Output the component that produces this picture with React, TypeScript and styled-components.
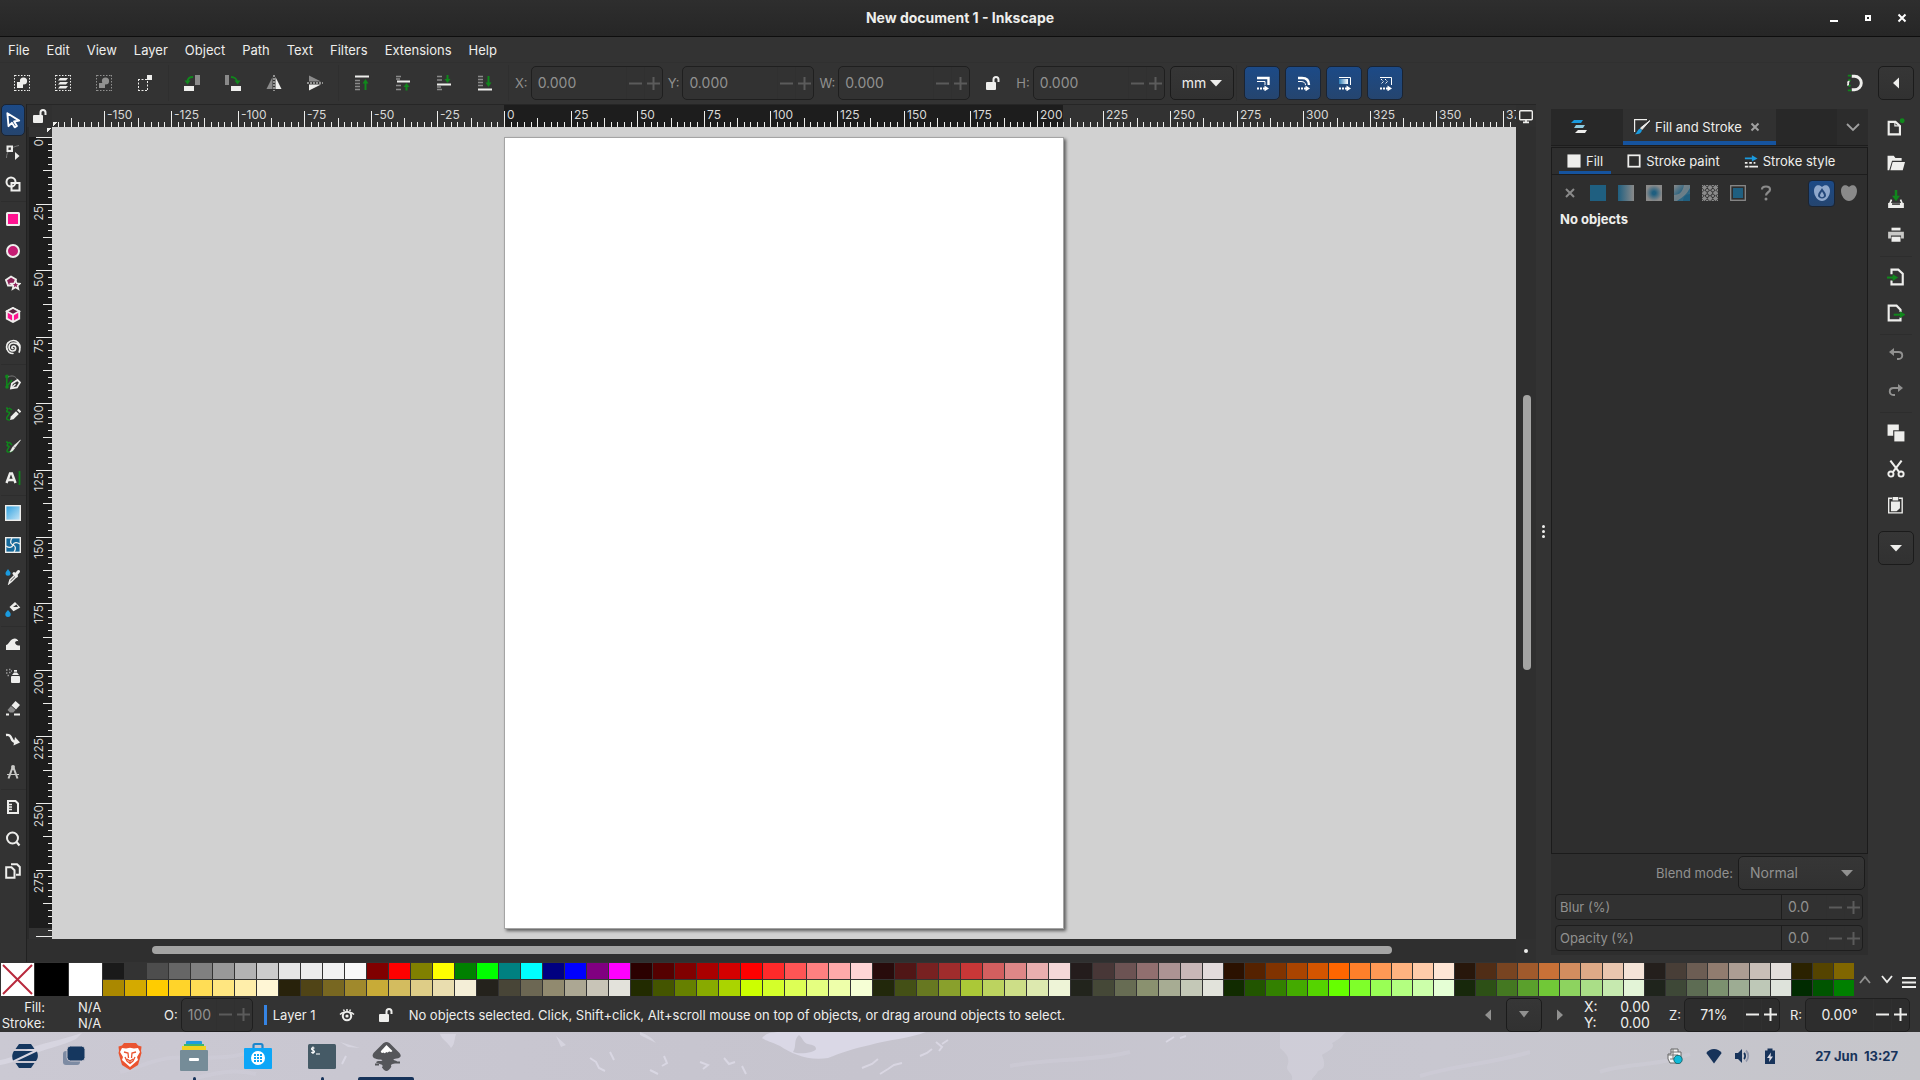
import React from "react";
import styled, { createGlobalStyle, css } from "styled-components";

const GlobalStyle = createGlobalStyle`
  *, *::before, *::after { box-sizing: border-box; }
  html, body { margin: 0; padding: 0; background: #333333; }
  body, button, input, select {
    font-family: Inter, "Noto Sans", sans-serif;
    font-size: 13px;
    line-height: 16px;
    color: #eeeeec;
  }
  button { border: 0; padding: 0; margin: 0; background: none; }
  svg { display: block; flex: none; }
`;

/* ---------- window frame ---------- */

const Screen = styled.div`
  display: flex;
  flex-direction: column;
  min-height: 100vh;
  background: #333333;
  overflow: hidden;
`;

const TitleBar = styled.header`
  display: grid;
  grid-template-columns: 1fr auto 1fr;
  align-items: center;
  height: 37px;
  padding-bottom: 1px;
  background: linear-gradient(#2e2e2e, #262626);
  border-bottom: 1px solid #0e0e0e;
`;

const Title = styled.h1`
  grid-column: 2;
  margin: 0;
  font-size: 14px;
  line-height: 16px;
  font-weight: 700;
`;

const WindowButtons = styled.div`
  display: flex;
  justify-content: flex-end;
  padding-right: 1px;
`;

const WindowButton = styled.button`
  display: grid;
  place-items: center;
  width: 34px;
  height: 34px;
`;

const MenuBar = styled.nav`
  display: flex;
  align-items: center;
  gap: 1px;
  height: 25px;
`;

const MenuItem = styled.button`
  padding: 0 8px;
  height: 25px;
`;

/* ---------- tool controls ---------- */

const ToolControls = styled.div`
  display: flex;
  align-items: center;
  height: 42px;
  padding: 0 6px 0 1px;
  box-shadow: inset 0 1px #303030;
`;

const Group = styled.div`
  display: flex;
  align-items: center;
`;

const FlatButton = styled.button<{ $w?: number; $h?: number; $dim?: boolean }>`
  display: grid;
  place-items: center;
  width: ${(p) => p.$w ?? 41}px;
  height: ${(p) => p.$h ?? 34}px;
  opacity: ${(p) => (p.$dim ? 0.5 : 1)};
`;

const RaisedButton = styled.button<{ $w?: number; $dim?: boolean }>`
  display: grid;
  place-items: center;
  width: ${(p) => p.$w ?? 36}px;
  height: 34px;
  border: 1px solid #1b1b1b;
  border-radius: 5px;
  background: linear-gradient(#363636, #313131);
  color: ${(p) => (p.$dim ? "#919190" : "#eeeeec")};
`;

const activeFill = css`
  background: linear-gradient(#1c4a87, #25456f);
  border: 1px solid #1a2433;
`;

const ToggleButton = styled.button`
  ${activeFill}
  display: grid;
  place-items: center;
  width: 36px;
  height: 34px;
  border-radius: 5px;
`;

const VLine = styled.span`
  width: 6px;
  height: 36px;
  background: linear-gradient(#2f2f2f, #2f2f2f) center / 1px 100% no-repeat;
`;

const Spacer = styled.span`
  flex: 1;
`;

const Fields = styled.div`
  display: flex;
  align-items: center;
  gap: 5px;
  margin-left: 4px;
`;

const Field = styled.div`
  display: flex;
  align-items: center;
  gap: 3px;
`;

const FieldLabel = styled.label<{ $dim?: boolean }>`
  color: ${(p) => (p.$dim ? "#919190" : "#eeeeec")};
`;

const SpinBox = styled.div<{ $w: number; $dim?: boolean }>`
  display: flex;
  align-items: stretch;
  width: ${(p) => p.$w}px;
  height: 34px;
  border: 1px solid #1f1f1f;
  border-radius: 5px;
  background: ${(p) => (p.$dim ? "#323232" : "#2d2d2d")};
  color: ${(p) => (p.$dim ? "#919190" : "#eeeeec")};
`;

const SpinInput = styled.input<{ $centered?: boolean }>`
  flex: 1;
  min-width: 0;
  padding: 0 0 0 ${(p) => (p.$centered ? 0 : 6)}px;
  border: 0;
  outline: 0;
  background: none;
  color: inherit;
  font-size: 14px;
  text-align: ${(p) => (p.$centered ? "center" : "left")};
`;

const SpinStep = styled.button<{ $dim?: boolean; $w?: number }>`
  display: grid;
  place-items: center;
  width: ${(p) => p.$w ?? 18}px;
  border-left: 1px solid #303030;
  color: ${(p) => (p.$dim ? "#5b5b5b" : "#eeeeec")};
`;

const SelectBox = styled.div<{ $w: number; $dim?: boolean }>`
  position: relative;
  display: flex;
  width: ${(p) => p.$w}px;
  height: 34px;
  border: 1px solid #1b1b1b;
  border-radius: 5px;
  background: linear-gradient(#363636, #313131);
  color: ${(p) => (p.$dim ? "#919190" : "#eeeeec")};
  > svg {
    position: absolute;
    right: 11px;
    top: 13px;
    pointer-events: none;
  }
`;

const Select = styled.select`
  appearance: none;
  flex: 1;
  min-width: 0;
  padding: 0 0 0 11px;
  border: 0;
  outline: 0;
  background: none;
  color: inherit;
  font-size: 14px;
  opacity: 1;
`;

/* ---------- work area ---------- */

const WorkArea = styled.main`
  display: flex;
  flex: 1;
  min-height: 0;
`;

const Toolbox = styled.aside`
  display: flex;
  flex-direction: column;
  width: 27px;
  padding-left: 1px;
  border-right: 1px solid #212121;
`;

const ToolButton = styled.button<{ $on?: boolean }>`
  display: grid;
  place-items: center;
  width: 24px;
  height: 32px;
  border: 1px solid transparent;
  border-radius: 5px;
  ${(p) => p.$on && activeFill}
`;

const HLine = styled.span<{ $h?: number }>`
  flex: none;
  height: ${(p) => p.$h ?? 3}px;
  background: linear-gradient(#2d2d2d, #2d2d2d) center / 100% 1px no-repeat;
`;

const Desk = styled.section`
  display: grid;
  flex: 1;
  min-width: 0;
  grid-template-columns: 25px 1fr 20px;
  grid-template-rows: 22px 1fr 23px;
  border-top: 1px solid #262626;
  background: #2f2f2f;
`;

const Corner = styled.button`
  display: grid;
  place-items: center;
  background: #303030;
`;

const TopRuler = styled.div`
  overflow: hidden;
  background: #323232;
`;

const SideRuler = styled.div`
  overflow: hidden;
  height: 0;
  min-height: 100%;
  background: #323232;
  border-left: 2px solid #2a2a2a;
`;

const RulerText = styled.text`
  font-family: Inter, "Noto Sans", sans-serif;
  font-size: 12px;
  fill: #d8d8d6;
`;

const Canvas = styled.div`
  min-width: 0;
  overflow: hidden;
  background: #d1d1d1;
  padding: 10px 0 10px 452px;
`;

const Sheet = styled.div`
  width: 560px;
  height: 792px;
  background: #ffffff;
  border: 1px solid #a4a4a4;
  box-shadow: 2px 2px 3px rgba(0, 0, 0, 0.55);
`;

const VScroll = styled.div`
  display: flex;
  flex-direction: column;
  align-items: center;
  padding: 268px 0 0 2px;
`;

const VThumb = styled.span`
  width: 8px;
  height: 275px;
  border-radius: 4px;
  background: #a4a4a3;
`;

const HScroll = styled.div`
  display: flex;
  align-items: center;
  padding: 0 124px 1px 100px;
`;

const HThumb = styled.span`
  flex: 1;
  height: 8px;
  border-radius: 4px;
  background: #a4a4a3;
`;

const PaneHandle = styled.div`
  display: flex;
  flex-direction: column;
  align-items: center;
  justify-content: center;
  gap: 2px;
  width: 15px;
  padding-bottom: 4px;
`;

const Dot = styled.span<{ $s?: number }>`
  width: ${(p) => p.$s ?? 3}px;
  height: ${(p) => p.$s ?? 3}px;
  border-radius: 50%;
  background: #eeeeec;
`;

/* ---------- docked dialog ---------- */

const Dock = styled.aside`
  display: flex;
  flex-direction: column;
  width: 317px;
  margin: 5px 0 7px;
  background: #2e2e2e;
`;

const DockTabs = styled.div`
  display: flex;
  height: 37px;
  background: #282828;
  border-bottom: 1px solid #1d1d1d;
`;

const DockTab = styled.button<{ $on?: boolean }>`
  display: flex;
  align-items: center;
  gap: 5px;
  width: ${(p) => (p.$on ? 153 : 72)}px;
  padding: 4px 0 0 ${(p) => (p.$on ? 11 : 20)}px;
  background: ${(p) => (p.$on ? "#313131" : "transparent")};
  border-bottom: 4px solid ${(p) => (p.$on ? "#15539e" : "transparent")};
`;

const DockMenu = styled.button`
  display: grid;
  place-items: center;
  width: 31px;
  background: #2c2c2c;
`;

const DialogBody = styled.div`
  display: flex;
  flex: 1;
  flex-direction: column;
  margin: 1px 0 2px;
  border: 1px solid #1b1b1b;
`;

const SubTabs = styled.div`
  display: flex;
  gap: 8px;
  height: 27px;
  padding: 0 7px;
  border-bottom: 1px solid #1d1d1d;
`;

const SubTab = styled.button<{ $on?: boolean }>`
  display: flex;
  align-items: center;
  gap: 5px;
  padding: 2px 8px 0;
  border-bottom: 3px solid ${(p) => (p.$on ? "#15539e" : "transparent")};
`;

const PaintRow = styled.div`
  display: flex;
  align-items: center;
  height: 36px;
  padding: 0 4px;
`;

const RuleToggle = styled.button`
  ${activeFill}
  display: grid;
  place-items: center;
  width: 27px;
  height: 27px;
  border-radius: 4px;
`;

const Message = styled.p`
  margin: 0;
  padding: 0 8px;
  font-weight: 700;
`;

const BlendRow = styled.div`
  display: flex;
  align-items: center;
  justify-content: flex-end;
  gap: 5px;
  padding-right: 3px;
`;

const Sliders = styled.div`
  display: grid;
  gap: 5px;
  padding: 4px 5px 4px 4px;
`;

const SliderRow = styled.div`
  display: flex;
  align-items: stretch;
  height: 26px;
  border: 1px solid #1d1d1d;
  border-radius: 4px;
  background: #313131;
  color: #919190;
`;

const SliderLabel = styled.label`
  display: flex;
  flex: 1;
  align-items: center;
  padding-left: 4px;
  border-right: 1px solid #1d1d1d;
`;

const SliderValue = styled.div`
  display: flex;
  width: 80px;
`;

const Commands = styled.aside`
  display: flex;
  flex-direction: column;
  align-items: center;
  width: 52px;
  padding: 5px 0 0 4px;
  > ${HLine} { width: 32px; }
  > ${RaisedButton} { margin-top: 8px; }
`;

/* ---------- palette ---------- */

const Palette = styled.div`
  display: flex;
  align-items: flex-start;
  height: 35px;
  padding: 1px 0 0 1px;
`;

const BigSwatches = styled.div`
  display: flex;
  gap: 1px;
  padding-right: 1px;
`;

const BigSwatch = styled.button<{ $c: string }>`
  width: 33px;
  height: 33px;
  background: ${(p) => p.$c};
`;

const SwatchGrid = styled.div`
  display: grid;
  flex: 1;
  grid-template-columns: repeat(50, 22fr) repeat(31, 21fr);
  grid-template-rows: 16px 16px;
  gap: 1px;
`;

const Swatch = styled.button<{ $c: string }>`
  background: ${(p) => p.$c};
`;

const PaletteNav = styled.div`
  display: flex;
  align-items: center;
  height: 33px;
  width: 66px;
`;

/* ---------- status bar ---------- */

const StatusBar = styled.footer`
  display: flex;
  align-items: center;
  height: 35px;
`;

const StyleIndicator = styled.dl`
  display: grid;
  grid-template-columns: 45px auto;
  column-gap: 33px;
  margin: 0;
  width: 164px;
  dt { text-align: right; }
  dd { margin: 0; }
`;

const LayerButton = styled.button`
  padding-left: 6px;
  height: 20px;
  margin-left: 11px;
  border-left: 3px solid #3584e4;
`;

const Coordinates = styled.dl`
  display: grid;
  grid-template-columns: auto auto;
  justify-content: space-between;
  margin: 0 15px 0 6px;
  width: 66px;
  font-size: 14px;
  dd { margin: 0; text-align: right; }
`;

const StatusText = styled.p`
  margin: 0 0 0 15px;
  white-space: nowrap;
`;

/* ---------- desktop panel ---------- */

const Taskbar = styled.footer`
  position: relative;
  display: flex;
  align-items: stretch;
  height: 48px;
  overflow: hidden;
  background: linear-gradient(90deg, #cbc9d3, #c6c4ce 45%, #c8c7d0 75%, #c5c5ca);
  color: #17335a;
`;

const Wallpaper = styled.svg`
  position: absolute;
  left: 0;
  top: 0;
`;

const Launcher = styled.button<{ $w: number; $mark?: "dot" | "bar" }>`
  position: relative;
  display: grid;
  place-items: center;
  width: ${(p) => p.$w}px;
  height: 48px;
  &::after {
    content: "";
    position: absolute;
    bottom: 0;
    display: ${(p) => (p.$mark ? "block" : "none")};
    width: ${(p) => (p.$mark === "bar" ? 56 : 3)}px;
    height: 3px;
    border-radius: 2px 2px 0 0;
    background: #17335a;
  }
`;

const Tray = styled.div`
  position: relative;
  display: flex;
  align-items: center;
  margin-left: auto;
  padding-right: 22px;
`;

const Clock = styled.time`
  margin-left: 26px;
  font-weight: 700;
  white-space: pre;
`;

/* ---------- drawings ---------- */

const W = "#eeeeec";
const G = "#10871c";
const B = "#1a9ade";

const Ico = ({ s = 16, children }: { s?: number; children: React.ReactNode }) => (
  <svg width={s} height={s} viewBox="0 0 16 16" fill="none" aria-hidden="true">
    {children}
  </svg>
);

const Marquee = () => (
  <path d="M1 .5h15M1 15.5h15M.5 0v16M15.5 0v16" stroke={W} strokeDasharray="1.5 1.5" />
);

const selectAll = (
  <Ico>
    <Marquee />
    <rect x="3" y="7" width="6" height="6" fill={W} />
    <circle cx="9.5" cy="6" r="3.6" fill={W} />
  </Ico>
);
const selectLayers = (
  <Ico>
    <Marquee />
    <path d="M5 3h8l-2 2.500H3zM5 7h8l-2 2.500H3zM5 11h8l-2 2.500H3z" fill={W} />
  </Ico>
);
const deselect = (
  <Ico>
    <Marquee />
    <rect x="3" y="8" width="6" height="5" fill={W} />
    <circle cx="9.5" cy="6" r="3.6" fill={W} />
  </Ico>
);
const touchSelect = (
  <Ico>
    <path d="M1 4.500h10M1 15.500h10M1.500 4v12M10.500 6v10" stroke={W} strokeDasharray="2 1.500" />
    <rect x="10" y="0" width="5" height="5" fill={W} />
  </Ico>
);
const rotateLeft = (
  <Ico>
    <rect x="11" y="0" width="5" height="10" fill="#8a8a8a" />
    <rect x="0" y="11" width="10" height="5" fill={W} />
    <path d="M9 2C5.500 2 3.500 4 3.500 7" stroke={G} strokeWidth="1.800" />
    <path d="M.5 5.500h6L3.500 9.500z" fill={G} />
  </Ico>
);
const rotateRight = (
  <Ico>
    <rect x="0" y="0" width="4" height="10" fill="#8a8a8a" />
    <rect x="6" y="11" width="10" height="5" fill={W} />
    <path d="M6 2c3.500 0 6 2 6 5" stroke={G} strokeWidth="1.800" />
    <path d="M9.500 5.500h6l-3 4z" fill={G} />
  </Ico>
);
const flipH = (
  <Ico>
    <path d="M6.500 2v12H.5z" fill="#8a8a8a" />
    <path d="M9.500 2v12h6z" fill={W} />
    <path d="M8 0v16" stroke={W} strokeDasharray="2 1" />
  </Ico>
);
const flipV = (
  <Ico>
    <path d="M2 6.500V.5l12 6z" fill="#8a8a8a" />
    <path d="M2 9.500v6l12-6z" fill={W} />
    <path d="M0 8h16" stroke={W} strokeDasharray="2 1" />
  </Ico>
);
const raiseTop = (
  <Ico>
    <path d="M1 1.500h14" stroke={W} strokeWidth="2" />
    <path d="M1 5.500h5M1 8.500h5M1 11.500h5M1 14.500h5" stroke="#8a8a8a" strokeWidth="1.500" />
    <path d="M11.500 15V7" stroke={G} strokeWidth="2" />
    <path d="M8.500 8.500 11.500 4l3 4.500z" fill={G} />
  </Ico>
);
const raise = (
  <Ico>
    <path d="M2 6.500h13" stroke={W} strokeWidth="2" />
    <path d="M1 1.500h5M1 4h4M1 10.500h5M1 14.500h5" stroke="#8a8a8a" strokeWidth="1.500" />
    <path d="M11.500 15.500V11" stroke={G} strokeWidth="2" />
    <path d="M8.500 12 11.500 8l3 4z" fill={G} />
  </Ico>
);
const lower = (
  <Ico>
    <path d="M1 9.500h14" stroke={W} strokeWidth="2" />
    <path d="M1 1.500h5M1 5h5M1 12h4M1 14.500h5" stroke="#8a8a8a" strokeWidth="1.500" />
    <path d="M11.500 0v5" stroke={G} strokeWidth="2" />
    <path d="M8.500 4 11.500 8l3-4z" fill={G} />
  </Ico>
);
const lowerBottom = (
  <Ico>
    <path d="M1 14.500h14" stroke={W} strokeWidth="2" />
    <path d="M1 1.500h5M1 4.500h5M1 7.500h5M1 10.500h5" stroke="#8a8a8a" strokeWidth="1.500" />
    <path d="M11.500 1v8" stroke={G} strokeWidth="2" />
    <path d="M8.500 7.500 11.500 12l3-4.500z" fill={G} />
  </Ico>
);
const lock = (
  <Ico>
    <rect x="1" y="7" width="10" height="8" rx="1" fill={W} />
    <path d="M8.500 7V4.500a2.500 2.500 0 0 1 5 0V7" stroke={W} strokeWidth="2" />
  </Ico>
);
const Arrow = () => (
  <>
    <path d="M3 13.500h8" stroke="#fff" strokeWidth="1.800" strokeDasharray="2 1" />
    <path d="M10.500 10.500 15 13.500l-4.500 2.800z" fill="#fff" />
  </>
);
const scaleStroke = (
  <Ico>
    <path d="M3 3h11.500v7" stroke="#fff" strokeWidth="2.400" />
    <path d="M3 6.500h8V10" stroke="#fff" />
    <Arrow />
  </Ico>
);
const scaleCorners = (
  <Ico>
    <path d="M3 3h4c5 0 7 2.500 7 7" stroke="#fff" strokeWidth="2.400" />
    <path d="M3 6.500h3c3 0 4.500 1.500 4.500 3.500" stroke="#fff" />
    <Arrow />
  </Ico>
);
const moveGradients = (
  <Ico>
    <defs>
      <linearGradient id="mg">
        <stop stopColor="#2a7ab5" />
        <stop offset="1" stopColor="#fff" />
      </linearGradient>
    </defs>
    <path d="M3 2.500h11.500V10" stroke="#fff" />
    <rect x="3" y="4" width="9" height="5" fill="url(#mg)" />
    <Arrow />
  </Ico>
);
const movePatterns = (
  <Ico>
    <path d="M3 2.500h11.500V10" stroke="#fff" />
    <path d="m4 4 2.500 2.500L4 9M8 4l2.500 2.500L8 9" stroke="#fff" strokeDasharray="1.500 .7" />
    <Arrow />
  </Ico>
);
const magnet = (
  <Ico s={18}>
    <path d="M6 2h2.500a6 6 0 0 1 0 12H6" stroke={W} strokeWidth="2.600" />
    <path d="M2.500 1.500h3M2.500 14.500h3M3 5l2 1M3 11l2-1" stroke={G} strokeWidth="1.600" />
    <path d="M4 6.500C1 7 4.500 9 2 10" stroke={W} strokeWidth="1.600" />
  </Ico>
);
const TriLeft = ({ c = W }: { c?: string }) => (
  <Ico>
    <path d="M11 2.500v11L5 8z" fill={c} />
  </Ico>
);
const TriRight = ({ c = W }: { c?: string }) => (
  <Ico>
    <path d="M5 2.500v11L11 8z" fill={c} />
  </Ico>
);
const TriDown = ({ w = 12 }: { w?: number }) => (
  <svg width={w} height="7" viewBox="0 0 12 7" preserveAspectRatio="none" aria-hidden="true">
    <path d="M0 0h12L6 6.500z" fill="currentColor" />
  </svg>
);
const Minus = () => (
  <svg width="13" height="13" viewBox="0 0 13 13" aria-hidden="true">
    <path d="M0 6.500h13" stroke="currentColor" strokeWidth="2" />
  </svg>
);
const Plus = () => (
  <svg width="13" height="13" viewBox="0 0 13 13" aria-hidden="true">
    <path d="M0 6.500h13M6.500 0v13" stroke="currentColor" strokeWidth="2" />
  </svg>
);

const arrowTool = (
  <Ico s={18}>
    <path d="m3 2 10.500 6.500-4.500.8 2.500 4-2 1.200L7 10.500 4 13.500z" stroke="#fff" strokeWidth="1.700" strokeLinejoin="round" />
  </Ico>
);
const nodeTool = (
  <Ico>
    <path d="M1.500 14C1.500 7 6 3 14 1.500" stroke="#777" />
    <rect x="2.500" y="2.500" width="4.500" height="4.500" stroke={W} strokeWidth="2" />
    <path d="M10 8v8l4.500-4z" fill={W} />
  </Ico>
);
const shapeBuilder = (
  <Ico>
    <circle cx="6" cy="6" r="4.5" stroke={W} strokeWidth="2" />
    <rect x="6.500" y="7" width="8" height="7.500" stroke={W} strokeWidth="2" />
  </Ico>
);
const rectTool = (
  <Ico>
    <rect x="2" y="2" width="12" height="12" rx=".5" fill="#ff1290" stroke={W} strokeWidth="2" />
  </Ico>
);
const ellipseTool = (
  <Ico>
    <circle cx="8" cy="8" r="6" fill="#c51c73" stroke={W} strokeWidth="2" />
  </Ico>
);
const starTool = (
  <Ico>
    <path d="m6 1.500 5 3-1.500 6H3L1 5z" fill="#8d2359" stroke={W} strokeWidth="1.800" />
    <path d="m10.500 5.500 1.300 2.800 3.200.3-2.400 2.100.8 3.300-2.900-1.700-2.900 1.700.8-3.300-2.400-2.100 3.200-.3z" fill="#8d2359" stroke={W} strokeWidth="1.600" />
  </Ico>
);
const boxTool = (
  <Ico>
    <path d="m8 1 6.200 3.300v7.400L8 15l-6.200-3.300V4.300z" fill="#ff1290" stroke={W} strokeWidth="1.900" />
    <path d="m8 1 6.200 3.300L8 7.700 1.800 4.300z" fill="#5d2442" stroke={W} strokeWidth="1.700" />
    <path d="M8 7.700V15" stroke={W} strokeWidth="1.900" />
  </Ico>
);
const spiralTool = (
  <Ico>
    <path d="M8 9.500c-1.500 0-1.500-2.500.5-2.500 3 0 3 5-.8 5-5 0-5-8 1-8 5.800 0 7 5 5.500 9M2 10C.5 5 4 1.500 8.500 1.500c3.500 0 6.500 3 6.500 7" stroke={W} strokeWidth="1.700" strokeLinecap="round" />
    <path d="M2 10c.8 3 3 4.500 6 4.500" stroke={W} strokeWidth="1.500" strokeLinecap="round" />
  </Ico>
);
const penTool = (
  <Ico>
    <path d="M1.800 3v10M2 12 7 6" stroke={G} strokeWidth="1.500" />
    <circle cx="2" cy="2.5" r="2" fill={G} />
    <circle cx="2" cy="13" r="1.800" fill={G} />
    <path d="M3 3c4-2 7-1 9 2" stroke="#777" />
    <path d="M6 14.500 7 9.500l5.500-3.500 2.500 2.500-3 5z" stroke={W} strokeWidth="1.800" />
    <path d="m6 14.500 4.500-4.500" stroke={W} strokeWidth="1.400" />
  </Ico>
);
const pencilTool = (
  <Ico>
    <path d="M1 2c5 0-2 4 2 4s0 3-1 5 0 3 3 3M4 2l3 2" stroke={G} strokeWidth="1.500" />
    <path d="m5 14 .8-3.500L11 5.300l2.800 2.800L8.500 13.300z" fill={W} />
    <path d="m12 4.300 1.500-1.500 2.700 2.700L14.700 7z" fill={W} />
  </Ico>
);
const callTool = (
  <Ico>
    <path d="M1 4c5 0-1 4 2 4s-1 3-1 5c0 2 4 1 6-1M4 4l3 3" stroke={G} strokeWidth="1.500" />
    <path d="M15.500 2 10 9.500 8.500 8zM8 8.500 9.700 10 8 12.500l-3 1.500z" fill={W} stroke={W} strokeWidth=".6" />
  </Ico>
);
const textTool = (
  <Ico>
    <path d="M1.500 13 5 3.500h2L10.500 13M3 10h6" stroke={W} strokeWidth="2.400" />
    <path d="M14.500 1v14" stroke={G} strokeWidth="1.800" />
  </Ico>
);
const gradientTool = (
  <Ico>
    <defs>
      <linearGradient id="gt" x1="0" y1="0" x2="1" y2="1">
        <stop stopColor="#2a9fe0" />
        <stop offset="1" stopColor="#c9e6f6" />
      </linearGradient>
    </defs>
    <rect x=".7" y=".7" width="14.6" height="14.6" fill="url(#gt)" stroke={W} strokeWidth="1.400" />
  </Ico>
);
const meshTool = (
  <Ico>
    <rect x=".7" y=".7" width="14.6" height="14.6" fill="#15699b" stroke={W} strokeWidth="1.400" />
    <path d="M8 8C5 7 5 4 7 1M8 8c1-3 4-3 7-1M8 8c3 1 3 4 1 7M8 8c-1 3-4 3-7 1" stroke={W} strokeWidth="1.300" />
  </Ico>
);
const dropperTool = (
  <Ico>
    <path d="M3 0c1 2 2.500 2.500 2.500 4.300a2.500 2.500 0 0 1-5 0C.5 2.500 2 2 3 0z" fill={B} />
    <path d="m4 14.500 1-3.500 5-5 1.500 1.500-5 5z" stroke={W} strokeWidth="1.500" />
    <path d="M9 4.500 11.500 7M10.500 6l3-3.500" stroke={W} strokeWidth="3" strokeLinecap="round" />
  </Ico>
);
const bucketTool = (
  <Ico>
    <path d="m10 1 5.300 5.500-6.800 3.800-4-4.300z" fill={W} />
    <path d="m8 6 3.500-2.500L13 6z" fill="#333" />
    <path d="M3 9c1 1.500 2.700 2.500 2.700 4.200a2.700 2.700 0 0 1-5.400 0C.3 11.500 2 10.500 3 9z" fill={B} />
  </Ico>
);
const tweakTool = (
  <Ico>
    <path d="M1 14V9c3 0 3.500-6 8.500-6.500 2.500 0 3.500 1.500 3.800 2.800-2-.8-3.800.5-3 2.200.7 1.700 2.500 2 4.700 2V14z" fill={W} />
  </Ico>
);
const sprayTool = (
  <Ico>
    <rect x="6" y="8" width="9" height="7" rx="1" fill={W} />
    <path d="M7 7h7l-2-2.500H9zM9 2h3v1.800H9z" fill={W} />
    <path d="M1 2h1.500M4 1.500h1.500M1 5h1.500M4 4.500h1.500M2.500 7.500H4M6 3h1" stroke="#999" strokeWidth="1.400" />
  </Ico>
);
const eraserTool = (
  <Ico>
    <path d="m10.500 1 4.500 4-4 4.500L6.500 5.500z" fill={W} />
    <path d="m6 6 4.500 4-2.200 2.500H5L2.500 10z" fill="#8a8a8a" />
    <path d="M1 14.500h3M9 14.500h6" stroke={W} strokeWidth="1.800" />
  </Ico>
);
const connectorTool = (
  <Ico>
    <path d="M1 3c8-1 3 7 10 7" stroke={W} strokeWidth="2.400" />
    <path d="m10 5 5 5.500-6.500 3z" fill={W} />
  </Ico>
);
const lpeTool = (
  <Ico>
    <path d="M3.500 14.500 7 5h2l3.500 9.500" stroke="#c9c9c7" strokeWidth="2" />
    <circle cx="8" cy="3" r="2" fill="#c9c9c7" />
    <path d="M2 10.500h12" stroke="#c9c9c7" />
  </Ico>
);
const measureTool = (
  <Ico>
    <path d="M3 2h7.500L13 4.500V14H3z" stroke={W} strokeWidth="2" />
    <path d="M3 5.500h4M3 8h4M3 10.500h4" stroke={W} strokeWidth="1.400" />
  </Ico>
);
const zoomTool = (
  <Ico>
    <circle cx="7.5" cy="7" r="5.5" stroke={W} strokeWidth="2" />
    <path d="m11.500 11 3 3.500" stroke={W} strokeWidth="2.200" />
  </Ico>
);
const pagesTool = (
  <Ico>
    <path d="M1.200 4.200h5.300l3 3v7.600H1.200z" stroke={W} strokeWidth="2" />
    <path d="M6 1.200h6l2.800 2.800v7.800H11" stroke={W} strokeWidth="2" />
  </Ico>
);

const tools: React.ReactNode[][] = [
  [arrowTool, nodeTool, shapeBuilder],
  [rectTool, ellipseTool, starTool, boxTool, spiralTool],
  [penTool, pencilTool, callTool, textTool],
  [gradientTool, meshTool, dropperTool, bucketTool],
  [tweakTool, sprayTool, eraserTool, connectorTool, lpeTool],
  [measureTool, zoomTool, pagesTool],
];

const newDoc = (
  <Ico s={18}>
    <path d="M1.500 3.500h6l4 3.500v7.500h-10z" stroke={W} strokeWidth="1.900" />
    <path d="M7 3.500V7h4.500" stroke={W} />
    <circle cx="13.5" cy="2.5" r="2.2" fill={G} />
  </Ico>
);
const openDoc = (
  <Ico s={18}>
    <path d="M.5 14.500v-13H6l1.500 2H13V6H4.500L2 14.500z" fill={W} />
    <path d="M5 7h11l-2 7.500H3z" fill={W} />
  </Ico>
);
const saveDoc = (
  <Ico s={18}>
    <path d="M4 8.500 2.500 12M12 8.500l1.500 3.500" stroke={W} strokeWidth="1.500" />
    <path d="M1 11.500h14V16H1z" fill={W} />
    <path d="M4.500 12.500h7" stroke="#333" strokeWidth="1.400" />
    <path d="M8 0v6" stroke={G} strokeWidth="2.200" />
    <path d="M4.500 5h7L8 10z" fill={G} />
  </Ico>
);
const printDoc = (
  <Ico s={18}>
    <path d="M4 1.500h8V4H4z" fill={W} />
    <path d="M1 5h14v6h-2.500V8.500h-9V11H1z" fill="#c9c9c7" />
    <path d="M4 9.500h8V14H4z" fill={W} />
  </Ico>
);
const importDoc = (
  <Ico s={18}>
    <path d="M4 5.500V1.500h6l4 3.500v9.500H4V11" stroke={W} strokeWidth="1.900" />
    <path d="M0 8.500h6" stroke={G} strokeWidth="1.800" />
    <path d="M5 5.500 10 8.500 5 11.500z" fill={G} />
  </Ico>
);
const exportDoc = (
  <Ico s={18}>
    <path d="M12 7V5L8.500 1.500h-7v13H12V12" stroke={W} strokeWidth="1.900" />
    <path d="M6 9.500h6" stroke={G} strokeWidth="1.800" />
    <path d="m11.500 6.500 5 3-5 3z" fill={G} />
  </Ico>
);
const undo = (
  <Ico>
    <path d="M4 5h6.500c5 0 5 7 0 7H9" stroke={W} strokeWidth="1.900" />
    <path d="M6 1v8L1 5z" fill={W} />
  </Ico>
);
const redo = (
  <Ico>
    <path d="M12 5H5.500c-5 0-5 7 0 7H7" stroke={W} strokeWidth="1.900" />
    <path d="M10 1v8l5-4z" fill={W} />
  </Ico>
);
const copyIcon = (
  <Ico s={18}>
    <path d="M.5.5h10v5h-5v5h-5z" fill={W} />
    <path d="M6.500 6.500H15.500v9h-9z" fill={W} />
  </Ico>
);
const cutIcon = (
  <Ico s={18}>
    <path d="m3 .5 8 10.500M13 .5 5 11" stroke={W} strokeWidth="1.800" />
    <circle cx="3.5" cy="12.5" r="2.3" stroke={W} strokeWidth="1.700" />
    <circle cx="12.5" cy="12.5" r="2.3" stroke={W} strokeWidth="1.700" />
  </Ico>
);
const pasteIcon = (
  <Ico s={18}>
    <path d="M4.500 2H1.500v13h12V2h-3" stroke={W} strokeWidth="1.200" />
    <path d="M5 .8h5V4H5zM3.500 4.800h8v6l-3 2.700h-5z" fill={W} />
  </Ico>
);

const commandGroups: { dim?: boolean; items: React.ReactNode[] }[] = [
  { items: [newDoc, openDoc, saveDoc, printDoc] },
  { items: [importDoc, exportDoc] },
  { dim: true, items: [undo, redo] },
  { items: [copyIcon, cutIcon, pasteIcon] },
];

/* ---------- data ---------- */

const ROW_ONE =
  "1a1a1a 333333 4d4d4d 666666 808080 999999 b3b3b3 cccccc e6e6e6 ececec f2f2f2 f9f9f9 " +
  "800000 ff0000 808000 ffff00 008000 00ff00 008080 00ffff 000080 0000ff 800080 ff00ff " +
  "2b0000 550000 800000 aa0000 d40000 ff0000 ff2a2a ff5555 ff8080 ffaaaa ffd5d5 " +
  "280b0b 501616 782121 a02c2c c83737 d35f5f de8787 e9afaf f4d7d7 " +
  "241c1c 483737 6c5353 916f6f ac9393 c8b7b7 e3dbdb " +
  "2b1100 552200 803300 aa4400 d45500 ff6600 ff7f2a ff9955 ffb380 ffccaa ffe6d5 " +
  "28170b 502d16 784421 a05a2c c87137 d38d5f deaa87 e9c6af f4e3d7 " +
  "241f1c 483e37 6c5d53 917c6f ac9d93 c8beb7 e3dedb 2b2200 554400 806600";
const ROW_TWO =
  "aa8800 d4aa00 ffcc00 ffd42a ffdd55 ffe680 ffeeaa fff6d5 " +
  "28220b 504416 786721 a0892c c8ab37 d3bc5f decd87 e9ddaf f4eed7 " +
  "24221c 484537 6c6753 918a6f aca793 c8c4b7 e3e2db " +
  "222b00 445500 668000 88aa00 aad400 ccff00 d4ff2a ddff55 e5ff80 eeffaa f6ffd5 " +
  "22280b 445016 677821 89a02c abc837 bcd35f cdde87 dde9af eef4d7 " +
  "22241c 454837 676c53 8a916f a7ac93 c4c8b7 e2e3db " +
  "112b00 225500 338000 44aa00 55d400 66ff00 7fff2a 99ff55 b3ff80 ccffaa e5ffd5 " +
  "17280b 2d5016 447821 5aa02c 71c837 8dd35f aade87 c6e9af e3f4d7 " +
  "1f241c 3e4837 5d6c53 7c916f 9dac93 bec8b7 dee3db 002b00 005500 008000";
const swatches = `${ROW_ONE} ${ROW_TWO}`.split(" ");

const PX_PER_MM = 2.664;

function ticks(from: number, to: number) {
  const out: { mm: number; kind: number }[] = [];
  for (let i = from; i <= to; i++) {
    out.push({ mm: i * 2.5, kind: i % 10 === 0 ? 2 : i % 5 === 0 ? 1 : 0 });
  }
  return out;
}

const HorizontalRuler = () => {
  const origin = 452;
  return (
    <svg width="100%" height="22" shapeRendering="crispEdges" role="img" aria-label="Horizontal ruler">
      <rect x={origin} y="0" width={210 * PX_PER_MM} height="22" fill="#1d1d1d" />
      {ticks(-67, 152).map(({ mm, kind }) => {
        const x = Math.round(origin + mm * PX_PER_MM);
        return (
          <g key={mm}>
            <rect x={x} y={[17, 13, 6][kind]} width="1" height="16" fill={W} />
            {kind === 2 && (
              <RulerText x={x + 3} y="14">
                {mm}
              </RulerText>
            )}
          </g>
        );
      })}
      <path d="M1 21v-4h4z" fill={W} />
    </svg>
  );
};

const VerticalRuler = () => {
  const origin = 10;
  return (
    <svg width="23" height="813" shapeRendering="crispEdges" role="img" aria-label="Vertical ruler">
      <rect x="0" y={origin} width="23" height={297 * PX_PER_MM} fill="#1d1d1d" />
      {ticks(0, 120).map(({ mm, kind }) => {
        const y = Math.round(origin + mm * PX_PER_MM);
        return (
          <g key={mm}>
            <rect x={[19, 14, 7][kind]} y={y} width="16" height="1" fill={W} />
            {kind === 2 && mm < 300 && (
              <RulerText transform={`translate(14 ${y + 2}) rotate(-90)`} textAnchor="end">
                {mm}
              </RulerText>
            )}
          </g>
        );
      })}
      <path d="M22 1h-4v4z" fill={W} />
    </svg>
  );
};

interface SpinProps {
  id: string;
  value: string;
  w: number;
  dim?: boolean;
  centered?: boolean;
}
const Spin = ({ id, value, w, dim, centered }: SpinProps) => (
  <SpinBox $w={w} $dim={dim}>
    <SpinInput id={id} defaultValue={value} disabled={dim} $centered={centered} />
    <SpinStep $dim={dim} aria-label="Decrease"><Minus /></SpinStep>
    <SpinStep $dim={dim} aria-label="Increase"><Plus /></SpinStep>
  </SpinBox>
);

const LabeledSpin = ({ label, brightLabel, ...rest }: SpinProps & { label: string; brightLabel?: boolean }) => (
  <Field>
    <FieldLabel htmlFor={rest.id} $dim={rest.dim && !brightLabel}>{label}</FieldLabel>
    <Spin {...rest} />
  </Field>
);

const paint = "#1f5f80";
const paintIcons = [
  <Ico key="none"><path d="m4 4 8 8M12 4l-8 8" stroke="#8a8a8a" strokeWidth="2" /></Ico>,
  <Ico key="flat"><rect width="16" height="16" fill={paint} /></Ico>,
  <Ico key="lin">
    <defs><linearGradient id="pl"><stop stopColor={paint} /><stop offset="1" stopColor="#8a8a8a" /></linearGradient></defs>
    <rect width="16" height="16" fill="url(#pl)" />
  </Ico>,
  <Ico key="rad">
    <defs><radialGradient id="pr"><stop offset=".2" stopColor={paint} /><stop offset="1" stopColor="#8a8a8a" /></radialGradient></defs>
    <rect width="16" height="16" fill="url(#pr)" />
  </Ico>,
  <Ico key="mesh">
    <defs><linearGradient id="pm" x2="1" y2="1"><stop stopColor="#8a8a8a" /><stop offset=".5" stopColor={paint} /><stop offset="1" stopColor="#4a7488" /></linearGradient></defs>
    <rect width="16" height="16" fill="url(#pm)" />
    <path d="M0 10C6 10 9 6 10 0h6v3c-3 6-7 9-13 13H0z" fill="#8a8a8a" opacity=".7" />
    <path d="M9 16c0-4 3-7 7-7v7z" fill={paint} />
  </Ico>,
  <Ico key="pat">
    {[2.5, 8, 13.5].map((y) => [2.5, 8, 13.5].map((x) => (
      <path key={`${x}-${y}`} d={`M${x} ${y - 2.7}l2.700 2.700-2.700 2.700-2.700-2.700z`} fill="#8a8a8a" />
    )))}
    {[0, 5.2, 10.8, 16].map((y) => [0, 5.2, 10.8, 16].map((x) => (
      <circle key={`${x}-${y}`} cx={x} cy={y} r="1.3" fill="#8a8a8a" />
    )))}
  </Ico>,
  <Ico key="swatch">
    <rect x=".7" y=".7" width="14.6" height="14.6" stroke="#8a8a8a" strokeWidth="1.300" />
    <rect x="3" y="3" width="10" height="10" fill={paint} />
  </Ico>,
  <Ico key="unset">
    <path d="M4 4.500C4 .5 12 .5 12 4.500c0 3-4 2.500-4 6" stroke="#8a8a8a" strokeWidth="2.200" />
    <circle cx="8" cy="14" r="1.5" fill="#8a8a8a" />
  </Ico>,
];

const heart = "M8 2C5-1 0 0 0 6c0 5 4 10 8 10s8-5 8-10c0-6-5-7-8-4z";

export default function App() {
  return (
    <Screen>
      <GlobalStyle />
      <TitleBar>
        <Title>New document 1 - Inkscape</Title>
        <WindowButtons>
          <WindowButton aria-label="Minimize">
            <Ico><path d="M4 11h8" stroke="#fff" strokeWidth="2" /></Ico>
          </WindowButton>
          <WindowButton aria-label="Maximize">
            <Ico><rect x="6" y="6" width="4" height="4" stroke="#fff" strokeWidth="2" /></Ico>
          </WindowButton>
          <WindowButton aria-label="Close">
            <Ico><path d="m4.500 4.500 7 7M11.500 4.500l-7 7" stroke="#fff" strokeWidth="2" /></Ico>
          </WindowButton>
        </WindowButtons>
      </TitleBar>

      <MenuBar>
        {["File", "Edit", "View", "Layer", "Object", "Path", "Text", "Filters", "Extensions", "Help"].map((m) => (
          <MenuItem key={m}>{m}</MenuItem>
        ))}
      </MenuBar>

      <ToolControls>
        <Group>
          <FlatButton aria-label="Select all">{selectAll}</FlatButton>
          <FlatButton aria-label="Select all in all layers">{selectLayers}</FlatButton>
          <FlatButton aria-label="Deselect" $dim>{deselect}</FlatButton>
          <FlatButton aria-label="Touch selection">{touchSelect}</FlatButton>
        </Group>
        <VLine />
        <Group>
          <FlatButton aria-label="Rotate left">{rotateLeft}</FlatButton>
          <FlatButton aria-label="Rotate right">{rotateRight}</FlatButton>
          <FlatButton aria-label="Flip horizontal">{flipH}</FlatButton>
          <FlatButton aria-label="Flip vertical">{flipV}</FlatButton>
        </Group>
        <VLine />
        <Group>
          <FlatButton aria-label="Raise to top">{raiseTop}</FlatButton>
          <FlatButton aria-label="Raise">{raise}</FlatButton>
          <FlatButton aria-label="Lower">{lower}</FlatButton>
          <FlatButton aria-label="Lower to bottom">{lowerBottom}</FlatButton>
        </Group>
        <VLine />
        <Fields>
          <LabeledSpin id="x" label="X:" value="0.000" w={132} dim />
          <LabeledSpin id="y" label="Y:" value="0.000" w={132} dim />
          <LabeledSpin id="w" label="W:" value="0.000" w={132} dim />
          <FlatButton aria-label="Lock ratio" $w={36}>{lock}</FlatButton>
          <LabeledSpin id="h" label="H:" value="0.000" w={132} dim />
          <SelectBox $w={64}>
            <Select aria-label="Units" defaultValue="mm">
              <option>mm</option>
              <option>px</option>
            </Select>
            <TriDown />
          </SelectBox>
        </Fields>
        <VLine />
        <Fields>
          <ToggleButton aria-label="Scale stroke width">{scaleStroke}</ToggleButton>
          <ToggleButton aria-label="Scale rounded corners">{scaleCorners}</ToggleButton>
          <ToggleButton aria-label="Move gradients">{moveGradients}</ToggleButton>
          <ToggleButton aria-label="Move patterns">{movePatterns}</ToggleButton>
        </Fields>
        <Spacer />
        <FlatButton aria-label="Snapping" $w={48}>{magnet}</FlatButton>
        <RaisedButton aria-label="Snap options"><TriLeft /></RaisedButton>
      </ToolControls>

      <WorkArea>
        <Toolbox>
          {tools.map((group, g) => (
            <React.Fragment key={g}>
              {g > 0 && <HLine />}
              {group.map((icon, i) => (
                <ToolButton key={i} $on={g === 0 && i === 0} aria-label={`Tool ${g + 1}.${i + 1}`}>
                  {icon}
                </ToolButton>
              ))}
            </React.Fragment>
          ))}
        </Toolbox>

        <Desk>
          <Corner aria-label="Lock guides">{lock}</Corner>
          <TopRuler><HorizontalRuler /></TopRuler>
          <Corner aria-label="Display mode">
            <Ico>
              <rect x="1.700" y="2.700" width="12.600" height="9" rx="1" stroke={W} strokeWidth="1.400" />
              <path d="M5 14.300h6M8 12v2" stroke={W} strokeWidth="1.800" />
            </Ico>
          </Corner>
          <SideRuler><VerticalRuler /></SideRuler>
          <Canvas><Sheet /></Canvas>
          <VScroll><VThumb /></VScroll>
          <span />
          <HScroll><HThumb /></HScroll>
          <Corner aria-label="Sticky zoom"><Dot $s={4} /></Corner>
        </Desk>

        <PaneHandle><Dot /><Dot /><Dot /></PaneHandle>

        <Dock>
          <DockTabs>
            <DockTab aria-label="Layers and objects">
              <Ico>
                <path d="M3 1h9l-2 3H0z" fill={B} />
                <path d="M5 6h9l-2 3H3z" fill="#8fcbe0" />
                <path d="M7 11h9l-2 3H4z" fill={W} />
              </Ico>
            </DockTab>
            <DockTab $on>
              <Ico>
                <path d="M.6 13V.6H13" stroke={W} strokeWidth="1.200" />
                <path d="M16 1.500 8 10.500 6.500 9z" fill={W} stroke={W} />
                <path d="M6 9.500 8 11.500c-1 3-3.500 4-7 3.800 2-1.500 2.500-4.800 5-5.800z" fill={B} />
              </Ico>
              Fill and Stroke
              <Ico><path d="m4.500 4.500 7 7M11.500 4.500l-7 7" stroke="#a0a0a0" strokeWidth="2" /></Ico>
            </DockTab>
            <Spacer />
            <DockMenu aria-label="Dialogs">
              <Ico><path d="m2 5 6 6 6-6" stroke="#a0a0a0" strokeWidth="1.800" /></Ico>
            </DockMenu>
          </DockTabs>
          <DialogBody>
            <SubTabs>
              <SubTab $on>
                <Ico s={14}><rect x=".5" y=".5" width="15" height="15" fill={W} /></Ico>
                Fill
              </SubTab>
              <SubTab>
                <Ico s={14}><rect x="1.500" y="1.500" width="13" height="13" stroke={W} strokeWidth="2" /></Ico>
                Stroke paint
              </SubTab>
              <SubTab>
                <Ico s={14}>
                  <path d="M1 5h9" stroke={B} strokeWidth="2" />
                  <path d="M9 1.500 15.500 5 9 8.500z" fill={B} />
                  <path d="M1 10h3M6 10h3M11 10h2M1 14.500h4M6 14.500h10" stroke={W} strokeWidth="2" />
                </Ico>
                Stroke style
              </SubTab>
            </SubTabs>
            <PaintRow>
              {paintIcons.map((icon, i) => (
                <FlatButton key={i} $w={28} $h={27} aria-label={`Paint ${i + 1}`}>{icon}</FlatButton>
              ))}
              <Spacer />
              <RuleToggle aria-label="Even-odd fill rule">
                <Ico>
                  <path d={heart} fill="#8fa8cc" />
                  <path d="M8 3c1 2.500 4 4.500 4 7.300C12 14.500 4 14.500 4 10.300 4 7.500 7 5.500 8 3z" fill="#24487a" />
                  <path d="M8 6.500c.7 1.500 2 2.500 2 4 0 2.200-4 2.200-4 0C6 9 7.300 8 8 6.500z" fill="#8fa8cc" />
                </Ico>
              </RuleToggle>
              <FlatButton $w={28} $h={27} aria-label="Nonzero fill rule">
                <Ico><path d={heart} fill="#8a8a8a" /></Ico>
              </FlatButton>
            </PaintRow>
            <Message>No objects</Message>
          </DialogBody>
          <BlendRow>
            <FieldLabel htmlFor="blend" $dim>Blend mode:</FieldLabel>
            <SelectBox $w={127} $dim>
              <Select id="blend" defaultValue="Normal" disabled>
                <option>Normal</option>
              </Select>
              <TriDown />
            </SelectBox>
          </BlendRow>
          <Sliders>
            {["Blur (%)", "Opacity (%)"].map((name) => (
              <SliderRow key={name}>
                <SliderLabel htmlFor={name}>{name}</SliderLabel>
                <SliderValue>
                  <SpinInput id={name} defaultValue="0.0" disabled />
                  <SpinStep $dim aria-label="Decrease"><Minus /></SpinStep>
                  <SpinStep $dim aria-label="Increase"><Plus /></SpinStep>
                </SliderValue>
              </SliderRow>
            ))}
          </Sliders>
        </Dock>

        <Commands>
          {commandGroups.map((group, g) => (
            <React.Fragment key={g}>
              {g > 0 && <HLine $h={6} />}
              {group.items.map((icon, i) => (
                <FlatButton key={i} $w={36} $h={36} $dim={group.dim} aria-label={`Command ${g + 1}.${i + 1}`}>
                  {icon}
                </FlatButton>
              ))}
            </React.Fragment>
          ))}
          <RaisedButton aria-label="More commands"><TriDown /></RaisedButton>
        </Commands>
      </WorkArea>

      <Palette>
        <BigSwatches>
          <BigSwatch $c="#ffffff" aria-label="None">
            <svg width="33" height="33" viewBox="0 0 33 33" aria-hidden="true">
              <path d="m2 2 29 29M31 2 2 31" stroke="#b8293d" strokeWidth="2" />
            </svg>
          </BigSwatch>
          <BigSwatch $c="#000000" aria-label="Black" />
          <BigSwatch $c="#ffffff" aria-label="White" />
        </BigSwatches>
        <SwatchGrid>
          {swatches.map((c, i) => (
            <Swatch key={i} $c={`#${c}`} aria-label={`#${c}`} />
          ))}
        </SwatchGrid>
        <PaletteNav>
          <FlatButton $w={22} $h={33} $dim aria-label="Previous colors">
            <Ico><path d="m3 11 5-6 5 6" stroke={W} strokeWidth="1.800" /></Ico>
          </FlatButton>
          <FlatButton $w={22} $h={33} aria-label="Next colors">
            <Ico><path d="m3 4 5 6 5-6" stroke={W} strokeWidth="1.800" /></Ico>
          </FlatButton>
          <FlatButton $w={22} $h={33} aria-label="Palette menu">
            <Ico><path d="M1 6h14M1 10.500h14M1 15h14" stroke={W} strokeWidth="2" /></Ico>
          </FlatButton>
        </PaletteNav>
      </Palette>

      <StatusBar>
        <StyleIndicator>
          <dt>Fill:</dt><dd>N/A</dd>
          <dt>Stroke:</dt><dd>N/A</dd>
        </StyleIndicator>
        <LabeledSpin id="o" label="O:" value="100" w={72} dim brightLabel />
        <LayerButton>Layer 1</LayerButton>
        <FlatButton $w={62} aria-label="Toggle layer visibility">
          <Ico>
            <circle cx="8" cy="9" r="4.2" stroke={W} strokeWidth="2" />
            <circle cx="8" cy="9" r="1.6" fill={W} />
            <path d="M1 7.500c1.500-1.500 3-2 4-2M15 7.500c-1.500-1.500-3-2-4-2M8 2v3M4.500 2.500l1 2M11.500 2.500l-1 2" stroke={W} strokeWidth="1.500" />
          </Ico>
        </FlatButton>
        <FlatButton $w={16} aria-label="Lock layer">{lock}</FlatButton>
        <StatusText>
          No objects selected. Click, Shift+click, Alt+scroll mouse on top of objects, or drag around objects to select.
        </StatusText>
        <Spacer />
        <FlatButton $w={36} aria-label="Previous page"><TriLeft c="#919190" /></FlatButton>
        <RaisedButton $dim aria-label="Page list"><TriDown w={10} /></RaisedButton>
        <FlatButton $w={36} aria-label="Next page"><TriRight c="#919190" /></FlatButton>
        <Coordinates>
          <dt>X:</dt><dd>0.00</dd>
          <dt>Y:</dt><dd>0.00</dd>
        </Coordinates>
        <Fields>
          <LabeledSpin id="z" label="Z:" value="71%" w={96} centered />
          <span />
          <LabeledSpin id="r" label="R:" value="0.00°" w={105} centered />
          <span /><span />
        </Fields>
      </StatusBar>

      <Taskbar>
        <Wallpaper width="1920" height="48" viewBox="0 0 1920 48" aria-hidden="true">
          <path d="M762 6c4-4 6-6 20-6h144c-14 6-40 8-56 13-14 3-30 8-42 13-20 3-36-4-48-12-8-4-14-5-18-8z" fill="#dad8e6" />
          <path d="M793 20c4-6 0-12 6-17 4 3 4 8 9 9s8 2 8 5-16 6-23 3z" fill="#c6c4cf" />
          <path d="M0 28c14-2 24-10 36-14S68 6 82 1l-6 6C62 14 42 18 30 23S12 31 0 33zM340 10l20 6-12-1zM440 2h16c-2 6-1 10-5 14-3-6-9-8-11-14zM556 4l10 9-5 2zM640 0c8 3 12 6 16 11l-16-8z" fill="#dcdae5" opacity=".7" />
          <path d="M1280 0h66c-6 6-8 8-14 11 4 5-4 8-10 12 3 8 4 14-4 16-2 5-6 6-6 9h-20c2-8-8-8-4-16 2-8-4-12-8-16z" fill="#d6d4df" opacity=".55" />
          <path d="m700 30 8 3-5 4M724 26l5 6 6-2M742 34l4 8M664 24l3 7-5 3M650 38l8 4M880 42l8-5 6-4 8-2M936 10l6 5-3 4M948 8l-6 4M862 36l10-4 6-5M920 24l7-3 5-4M590 26l6 4 3 6 6 3M610 20l4 8M346 24l-4 8M1166 10l8-5M1180 6l6-2" stroke="#dddbe7" strokeWidth="2" opacity=".8" fill="none" />
          <path d="M120 40c20-4 30-12 50-14s60 4 84-8M196 46c30-8 46-8 60-4M1010 34c40-8 80-4 120-14M1420 44c40-12 60-10 110-24M1600 40c20-8 60-6 90-18" stroke="#d2d0db" strokeWidth="4" opacity=".4" fill="none" />
        </Wallpaper>

        <Launcher $w={50} aria-label="Zorin menu">
          <svg width="26" height="26" viewBox="0 0 26 26" aria-hidden="true">
            <path d="M7 1h12l3.500 5H3.500zM3.500 20h19L19 25H7zM2 8h19L1 17.500C-.3 14 0 11 2 8zM25 8.500c1.500 4 1 7-1 9.500H5z" fill="#15375f" />
          </svg>
        </Launcher>
        <Launcher $w={48} aria-label="Workspaces">
          <svg width="24" height="24" viewBox="0 0 24 24" aria-hidden="true">
            <rect x="1" y="7" width="17" height="14" rx="3" fill="#7d8ba3" />
            <rect x="5" y="2" width="18" height="15" rx="3.500" fill="#15375f" stroke="#c8c6d0" />
          </svg>
        </Launcher>
        <Launcher $w={64} aria-label="Brave">
          <svg width="24" height="28" viewBox="0 0 24 28" aria-hidden="true">
            <path d="m6 1 12 0 2 2.500 3.500 1L23 9l.5 2-3.500 12-8 5-8-5L.5 11 1 9 .5 4.500 4 3.500z" fill="#ea5430" />
            <path d="m4 6 4 .5 4-.8 4 .8 4-.5 2 4-3 5 1 3-8 7-8-7 1-3-3-5z" fill="#fff" />
            <path d="m6 10 4 1 .5 5M18 10l-4 1-.5 5M9 17l3 2 3-2M7 15l2 4 3 2.500 3-2.500 2-4M12 18v3" stroke="#ea5430" strokeWidth="1.300" fill="none" />
          </svg>
        </Launcher>
        <Launcher $w={64} $mark="dot" aria-label="Files">
          <svg width="28" height="30" viewBox="0 0 28 30" aria-hidden="true">
            <rect x="6" y="0" width="16" height="5" rx="1" fill="#1e9be0" />
            <rect x="4" y="3" width="20" height="4" fill="#3fb56c" />
            <rect x="2" y="5" width="24" height="6" fill="#f0d222" />
            <rect x="0" y="9" width="28" height="21" rx="1" fill="#758c98" />
            <rect x="9" y="17" width="10" height="3" rx="1" fill="#fff" />
          </svg>
        </Launcher>
        <Launcher $w={64} aria-label="Software">
          <svg width="28" height="28" viewBox="0 0 28 28" aria-hidden="true">
            <path d="M9.500 7V3.500q0-1.500 1.500-1.500h6q1.500 0 1.500 1.500V7" stroke="#1c86cc" strokeWidth="2.200" fill="none" />
            <rect x="0" y="6" width="28" height="21" rx="1" fill="#0da6f7" />
            <circle cx="14" cy="16" r="7" fill="#fff" />
            <path d="M10 12h2v2h-2zM13 12h2v2h-2zM16 12h2v2h-2zM10 15h2v2h-2zM13 15h2v2h-2zM16 15h2v2h-2zM10 18h2v2h-2zM13 18h2v2h-2zM16 18h2v2h-2z" fill="#0da6f7" />
          </svg>
        </Launcher>
        <Launcher $w={64} $mark="dot" aria-label="Terminal">
          <svg width="28" height="26" viewBox="0 0 28 26" aria-hidden="true">
            <rect width="28" height="25" y="1" rx="1.500" fill="#455a66" />
            <path d="M6.500 5.200C5 4.300 3.500 4.700 3.500 6s3 1 3 2.500-2 1.600-3.200.7M5 3.500v7.500M8 11h4" stroke="#fff" strokeWidth="1.100" fill="none" />
          </svg>
        </Launcher>
        <Launcher $w={64} $mark="bar" aria-label="Inkscape">
          <svg width="29" height="29" viewBox="0 0 29 29" aria-hidden="true">
            <path d="M14.500 0c2 0 3 1 4 2l9 9c2.500 3 1 5-3 5.500-4 .5-4 1 0 2.500 2 1.500-3 2-5 3.500-1.500 1.500 1 1.500-1 3.500-1 1.500-2.500 3-4 3s-3.500-1.500-4-3c-2-1 2-1.500-1-3.500-3-1-3-1-4.500-1.500-2-1 0-2 3-2 3.500-.5 3-1.500-1-1.500-5-.5-8-2.500-5.500-6.500l9-9c1-1 2-2 4-2z" fill="#55565a" />
            <path d="M14.500 3 20 8.500c1 1-1 2-2.500 1-1.500 0-1.500 2-3 .5-1.500 1-1.500 2-3 .5-1 1-3.500 0-2.500-1.500z" fill="#fff" />
            <path d="M21 20.500h7M3 22.500h4" stroke="#55565a" strokeWidth="2" />
          </svg>
        </Launcher>

        <Tray>
          <FlatButton $w={39} aria-label="Portal">
            <Ico>
              <path d="M4 1h7v3h3v6l-4 5H3l-2-4V6h3z" fill="#f5f5f5" stroke="#666" />
              <path d="M1 7h10M4 4h7M6 1v10M3 11h6" stroke="#777" />
              <circle cx="11" cy="11.5" r="4.2" fill="#10b9d8" stroke="#155" strokeWidth=".8" />
            </Ico>
          </FlatButton>
          <FlatButton $w={39} aria-label="Network">
            <Ico><path d="M8 15.500.3 5C4-.5 12-.5 15.700 5z" fill="#17335a" /></Ico>
          </FlatButton>
          <FlatButton $w={18} aria-label="Volume">
            <Ico>
              <path d="M1 5h3l4-4v14l-4-4H1z" fill="#17335a" />
              <path d="M10 5c1.500 1.500 1.500 4.500 0 6" stroke="#17335a" strokeWidth="1.800" />
              <path d="M12 2.500c3 3 3 8 0 11" stroke="#9197ab" strokeWidth="1.800" />
            </Ico>
          </FlatButton>
          <FlatButton $w={38} aria-label="Battery">
            <Ico>
              <path d="M3 2.500h2.500V.5h5v2H13V16H3z" fill="#17335a" />
              <path d="M9 4.500 5 10h2.500L7 14l4-5.500H8.500z" fill="#dcdbe4" />
            </Ico>
          </FlatButton>
          <Clock>{"27 Jun  13:27"}</Clock>
        </Tray>
      </Taskbar>
    </Screen>
  );
}
